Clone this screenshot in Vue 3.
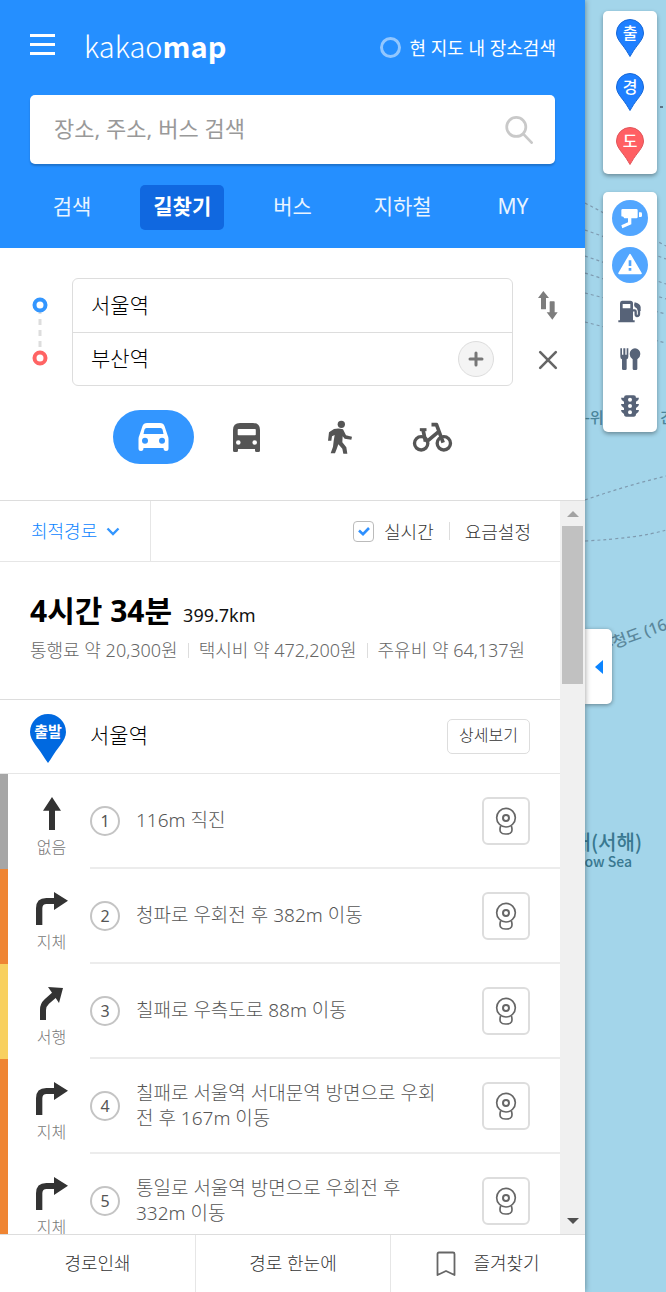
<script setup>
import { ref } from 'vue'

const tabs = ['검색', '길찾기', '버스', '지하철', 'MY']
const activeTab = ref('길찾기')
const keyword = ref('')
const inView = ref(false)
const origin = ref('서울역')
const destination = ref('부산역')
const mode = ref('car')
const sort = ref('최적경로')
const realtime = ref(true)

const modes = [
  { id: 'car', label: '자동차' },
  { id: 'bus', label: '대중교통' },
  { id: 'walk', label: '도보' },
  { id: 'bike', label: '자전거' }
]

const costs = ['통행료 약 20,300원', '택시비 약 472,200원', '주유비 약 64,137원']

const steps = [
  { icon: 'straight', traffic: '없음', level: 'none', lines: ['116m 직진'] },
  { icon: 'right', traffic: '지체', level: 'delay', lines: ['청파로 우회전 후 382m 이동'] },
  { icon: 'slight', traffic: '서행', level: 'slow', lines: ['칠패로 우측도로 88m 이동'] },
  { icon: 'right', traffic: '지체', level: 'delay', lines: ['칠패로 서울역 서대문역 방면으로 우회', '전 후 167m 이동'] },
  { icon: 'right', traffic: '지체', level: 'delay', lines: ['통일로 서울역 방면으로 우회전 후', '332m 이동'] }
]

const pins = [
  { text: '출', name: '출발지', kind: 'blue' },
  { text: '경', name: '경유지', kind: 'blue' },
  { text: '도', name: '도착지', kind: 'red' }
]
</script>

<template>
  <div class="page">
    <main class="panel">
      <header class="top">
        <div class="brand-row">
          <button class="menu" aria-label="메뉴"><i></i><i></i><i></i></button>
          <a class="logo" href="#">kakao<b>map</b></a>
          <label class="in-view">
            <input v-model="inView" type="checkbox" />
            <span>현 지도 내 장소검색</span>
          </label>
        </div>
        <form class="search" @submit.prevent>
          <input v-model="keyword" type="text" aria-label="장소, 주소, 버스 검색" placeholder="장소, 주소, 버스 검색" />
          <button aria-label="검색 실행">
            <svg width="28" height="28" viewBox="648 347 82 82" fill="none" stroke="#c9c9c9" stroke-width="8">
              <circle cx="681" cy="379" r="28" />
              <path d="M702 400l24 25" stroke-linecap="round" />
            </svg>
          </button>
        </form>
        <nav class="tabs">
          <a v-for="t in tabs" :key="t" href="#" :class="{ active: t === activeTab }" @click.prevent="activeTab = t"><span>{{ t }}</span></a>
        </nav>
      </header>

      <section class="planner">
        <div class="points">
          <svg class="dots" width="16" height="70" viewBox="0 0 16 70" fill="#fff">
            <path d="M8 14v40" stroke="#ddd" stroke-width="3" stroke-dasharray="6 5" stroke-dashoffset="3" />
            <circle cx="8" cy="8" r="5.5" stroke="#3396ff" stroke-width="4" />
            <circle cx="8" cy="61" r="5.5" stroke="#ff6464" stroke-width="4" />
          </svg>
          <div class="fields">
            <div class="field"><input v-model="origin" type="text" aria-label="출발지" /></div>
            <div class="field">
              <input v-model="destination" type="text" aria-label="도착지" />
              <button class="add" aria-label="경유지 추가">
                <svg width="16" height="16" viewBox="0 0 16 16"><path d="M8 2v12M2 8h12" stroke="#777" stroke-width="3" stroke-linecap="round" /></svg>
              </button>
            </div>
          </div>
          <div class="actions">
            <button aria-label="출발지와 도착지 바꾸기">
              <svg width="20" height="29" viewBox="747 90 60 87" fill="#7d7d7d">
                <path d="M763 90l17 21h-9v32q0 2-2 2h-11q-2 0-2-2v-32h-9zM790 176l-17-22h9v-31q0-2 2-2h11q2 0 2 2v31h9z" />
              </svg>
            </button>
            <button aria-label="지우기">
              <svg width="20" height="20" viewBox="0 0 20 20"><path d="M2.200 2.200l15.600 15.600M17.800 2.200L2.200 17.800" stroke="#666" stroke-width="2.600" stroke-linecap="round" /></svg>
            </button>
          </div>
        </div>
        <div class="modes">
          <button v-for="m in modes" :key="m.id" :class="{ on: m.id === mode }" :aria-label="m.label" @click="mode = m.id">
            <svg v-if="m.id === 'car'" width="31" height="28" viewBox="0 0 31 28" fill="currentColor" fill-rule="evenodd">
              <path d="M9 0h13q3.500 0 4.500 3l3 9q1 2 1 4v9.500q0 2.500-2.500 2.500t-2.500-3H5.500q0 3-2.500 3T.500 25.500V16q0-2 1-4l3-9q1-3 4.500-3zM8.500 5q-1.500 0-2 1.500L5.500 11h20l-1-4.500Q24 5 22.500 5zM7 14.700a3 3 0 100 6 3 3 0 000-6zM24 14.700a3 3 0 100 6 3 3 0 000-6z" />
            </svg>
            <svg v-else-if="m.id === 'bus'" width="27" height="29" viewBox="0 0 27 29" fill="currentColor" fill-rule="evenodd">
              <path d="M7 0h13q7 0 7 7v20.500q0 1.500-1.500 1.500h-2q-1.500 0-1.500-1.500V26H5v1.500Q5 29 3.500 29h-2Q0 29 0 27.500V7q0-7 7-7zM5.500 6q-.800 0-.800.800v4.700q0 .800.800.800h16.500q.800 0 .800-.800V6.800q0-.800-.800-.800zM5.300 17.200a2.300 2.300 0 100 4.600 2.300 2.300 0 000-4.600zM21.700 17.200a2.300 2.300 0 100 4.600 2.300 2.300 0 000-4.600z" />
            </svg>
            <svg v-else-if="m.id === 'walk'" width="24" height="34" viewBox="117 480 72 102" fill="currentColor">
              <circle cx="157" cy="493" r="11" />
              <path d="M120 517l15-10q14-4 27 1l9 18 18 4-2 9-20-3-6-7-1 18 12 15 3 19h-12l-3-15-12-13-5 14-5 13h-13l7-20 2-17 3-18-8 4-2 13h-10z" />
            </svg>
            <svg v-else width="41" height="30" viewBox="367 483 122 90" fill="none" stroke="currentColor">
              <g stroke-width="10"><circle cx="394" cy="547" r="20" /><circle cx="462" cy="547" r="20" /></g>
              <path d="M425 491h15l20 54M408 544l42-35M400 508l7 34" stroke-width="11" stroke-linejoin="round" />
              <path d="M390 506h20" stroke-width="9" />
            </svg>
          </button>
        </div>
      </section>

      <section class="result">
        <div class="scroll">
          <div class="options">
            <div class="sort">
              <select v-model="sort" aria-label="경로 기준"><option>최적경로</option><option>무료우선</option></select>
              <svg width="14" height="9" viewBox="0 0 14 9" fill="none"><path d="M1.500 1.500L7 7l5.500-5.500" stroke="#3396ff" stroke-width="2.400" /></svg>
            </div>
            <div class="option-right">
              <label class="live"><input v-model="realtime" type="checkbox" /><svg width="12" height="9" viewBox="0 0 12 9" fill="none"><path d="M1 3.500L5 7.200 11 1" stroke="#2e90ff" stroke-width="2.600" /></svg><span>실시간</span></label>
              <i class="bar"></i>
              <button class="fare">요금설정</button>
            </div>
          </div>

          <div class="summary">
            <p class="time"><strong>4시간 34분</strong><span>399.7km</span></p>
            <ul class="costs"><li v-for="c in costs" :key="c">{{ c }}</li></ul>
          </div>

          <div class="start">
            <svg class="start-pin" width="36" height="49" viewBox="0 0 36 49">
              <path d="M18 0a18 18 0 0118 18c0 9-9 16-15.500 27.500L18 49l-2.500-3.500C9 34 0 27 0 18A18 18 0 0118 0z" fill="#0069e0" />
              <text x="18" y="23" text-anchor="middle" font-size="15" font-weight="700" fill="#fff">출발</text>
            </svg>
            <h2>서울역</h2>
            <button>상세보기</button>
          </div>

          <ol class="steps">
            <li v-for="(s, i) in steps" :key="i" :class="s.level">
              <div class="turn">
                <svg v-if="s.icon === 'straight'" width="18" height="33" viewBox="126 81 54 99"><path d="M153 81l27 41h-18v58h-18v-58h-18z" /></svg>
                <svg v-else-if="s.icon === 'right'" width="32" height="33" viewBox="108 363 96 99"><path d="M108 462v-50q0-31 31-31h23v-18l42 26-42 28v-18h-22q-13 0-13 13v50z" /></svg>
                <svg v-else width="23" height="33" viewBox="117 648 69 99"><path d="M117 747v-31q0-18 14-31l22-20-12-17 45 3-12 45-10-15-20 17q-9 8-9 19v30z" /></svg>
                <span>{{ s.traffic }}</span>
              </div>
              <div class="step-body">
                <b>{{ i + 1 }}</b>
                <p><template v-for="(l, k) in s.lines" :key="k"><br v-if="k" />{{ l }}</template></p>
                <button aria-label="로드뷰">
                  <svg width="22" height="28" viewBox="285 82 66 84" fill="none" stroke="#666">
                    <circle cx="318" cy="114" r="28" stroke-width="5" />
                    <circle cx="318" cy="115" r="9" stroke-width="6" />
                    <path d="M302 138q-8 26 16 25 24 1 16-25" stroke-width="5" />
                  </svg>
                </button>
              </div>
            </li>
          </ol>
        </div>
        <div class="track" aria-hidden="true"><i class="up"></i><i class="thumb"></i><i class="down"></i></div>
      </section>

      <footer class="bottom">
        <button>경로인쇄</button>
        <button>경로 한눈에</button>
        <button>
          <svg width="20" height="26" viewBox="0 0 20 26" fill="none"><path d="M3 1.500h14q1.500 0 1.500 1.500v21L10 20l-8.500 4V3Q1.500 1.500 3 1.500z" stroke="#666" stroke-width="1.800" stroke-linejoin="round" /></svg>
          <span>즐겨찾기</span>
        </button>
      </footer>
    </main>

    <aside class="map">
      <svg class="contours" width="81" height="600" viewBox="585 0 81 600" fill="none" stroke="#7f9bb0" stroke-width="1.200" stroke-dasharray="3 3">
        <path d="M585 203L666 246M585 230L666 259M585 256L666 284M585 273L666 299M585 293L666 314M585 322L666 343M585 500Q625 486 666 476M585 541Q640 538 666 530" />
        <path d="M660 107h6" stroke="#334" />
      </svg>
      <span class="place wido">-위</span>
      <span class="place gan">간</span>
      <span class="place island">-청도 (16</span>
      <span class="place sea">황해(서해)</span>
      <span class="place sea-en">Yellow Sea</span>

      <button class="fold" aria-label="패널 접기"><i></i></button>

      <div class="tools">
        <div class="tool-group pins">
          <button v-for="p in pins" :key="p.name" :aria-label="p.name">
            <svg width="28" height="38" viewBox="0 0 28 38">
              <path :class="p.kind" d="M14 .500A13.500 13.500 0 0127.500 14c0 7-7 12-11.700 20.500L14 37.500l-1.800-3C7.500 26 .500 21 .500 14A13.500 13.500 0 0114 .500z" />
              <text x="14" y="20" text-anchor="middle" font-size="16" font-weight="500" fill="#fff">{{ p.text }}</text>
            </svg>
          </button>
        </div>
        <div class="tool-group layers">
          <button class="on" aria-label="CCTV">
            <svg width="36" height="36" viewBox="96 600 108 108" fill="#fff">
              <path d="M128 627h41q4 0 4 4v20q0 4-4 4h-15v18l-27 12-3-9 20-9v-12h-11q-2-6-9-6v-18q0-4 4-4zM177 637h5q4 0 4 4v6q0 4-4 4h-5z" />
            </svg>
          </button>
          <button class="on" aria-label="교통정보">
            <svg width="36" height="36" viewBox="96 201 108 108">
              <path d="M150 224l33 56h-66z" fill="#fff" stroke="#fff" stroke-width="5" stroke-linejoin="round" />
              <path d="M150 241v17M150 264v8" stroke="#52a6ff" stroke-width="8" />
            </svg>
          </button>
          <button aria-label="주유소">
            <svg width="24" height="23" viewBox="118 359 72 69" fill="#576378">
              <path fill-rule="evenodd" d="M130 361h25q8 0 8 8v51h5v6h-49v-6h5v-51q0-8 6-8zM132 371v13h23v-13z" />
              <path d="M162 390h6q3 0 3 3v9q0 5 4 5 6 0 6-5v-14" fill="none" stroke="#576378" stroke-width="7" />
              <path d="M168 366q16 3 18 14v12h-8l-4-8q-7-2-8-10z" />
            </svg>
          </button>
          <button aria-label="음식점">
            <svg width="21" height="22" viewBox="121 500 63 66" fill="#576378">
              <path d="M122 501h5v19h4v-19h6v19h4v-19h5v25q0 6-5 8v28q0 4-4 4h-6q-4 0-4-4v-28q-5-2-5-8zM166 501a16 17 0 0116 17q0 10-9 16v28q0 4-4 4h-6q-4 0-4-4v-28q-9-6-9-16a16 17 0 0116-17z" />
            </svg>
          </button>
          <button aria-label="신호등">
            <svg width="20" height="22" viewBox="120 639 60 66" fill="#576378" fill-rule="evenodd">
              <path d="M139 640h22q7 0 7 7h9q0 8-9 12v7h9q0 8-9 12v6h9q0 8-9 12 0 8-7 8h-22q-7 0-7-8-9-4-9-12h9v-6q-9-4-9-12h9v-7q-9-4-9-12h9q0-7 7-7zM150 647a6 6 0 100 12 6 6 0 000-12zM150 666a6 6 0 100 12 6 6 0 000-12zM150 685a6 6 0 100 12 6 6 0 000-12z" />
            </svg>
          </button>
        </div>
      </div>
    </aside>
  </div>
</template>

<style>
body { font-family: "Noto Sans", "Noto Sans CJK KR", sans-serif; font-weight: 300; }
</style>

<style scoped>
* { box-sizing: border-box; margin: 0; }
button, input, select { padding: 0; border: 0; background: none; font: inherit; color: inherit; border-radius: 0; outline: 0; }
button { cursor: pointer; display: flex; align-items: center; justify-content: center; }
a { color: inherit; text-decoration: none; }
ul, ol { list-style: none; padding: 0; }
svg { display: block; flex: none; }

.page { display: grid; grid-template-columns: minmax(0, 1fr) 81px; height: 100vh; overflow: hidden; }
.panel { display: flex; flex-direction: column; min-height: 0; background: #fff; position: relative; z-index: 1; box-shadow: 0 0 6px rgba(0, 0, 0, .4); }

.top { background: #258fff; color: #fff; padding-bottom: 18px; font-weight: 400; }
.brand-row { display: flex; align-items: center; height: 95px; padding: 0 29px 0 30px; }
.menu { display: flex; flex-direction: column; gap: 6px; width: 25px; margin-bottom: 6px; }
.menu i { width: 25px; height: 3px; background: #fff; }
.logo { margin-left: 29px; font: 300 29px/40px "Noto Sans CJK KR", sans-serif; margin-bottom: 6px; }
.logo b { font-weight: 700; }
.in-view { display: flex; align-items: center; gap: 8px; margin-left: auto; font-size: 18px; line-height: 26px; }
.in-view input { appearance: none; width: 21px; height: 21px; border: 3px solid #92c7ff; border-radius: 50%; }
.in-view input:checked { background: #fff; }
.search { display: flex; align-items: center; height: 69px; margin: 0 30px; padding: 0 22px 0 24px; background: #fff; border-radius: 5px; box-shadow: 0 2px 2px rgba(0, 0, 0, .2); }
.search input { flex: 1; min-width: 0; height: 60px; padding-bottom: 4px; font-size: 22px; color: #333; }
.search input::placeholder { color: #999; opacity: 1; }
.tabs { display: grid; grid-template-columns: repeat(5, 1fr); margin: 21px 17px 0; font-size: 21px; line-height: 42px; text-align: center; color: #e9f4ff; }
.tabs a { display: flex; justify-content: center; }
.tabs span { display: block; padding-bottom: 3px; }
.tabs .active span { width: 84px; border-radius: 5px; background: #1068e0; font-weight: 700; color: #fff; }

.planner { padding: 30px 27px 36px 32px; border-bottom: 1px solid #ddd; }
.points { display: flex; align-items: center; }
.dots { margin-right: 24px; }
.fields { flex: 1; min-width: 0; border: 1px solid #ddd; border-radius: 6px; }
.field { display: flex; align-items: center; height: 53px; padding: 0 18px; }
.field + .field { border-top: 1px solid #ddd; }
.field input { flex: 1; min-width: 0; height: 46px; padding-bottom: 4px; font-size: 21px; color: #000; }
.add { width: 36px; height: 36px; border: 1px solid #ddd; border-radius: 50%; background: #f4f4f4; }
.actions { display: flex; flex-direction: column; gap: 30px; align-items: center; margin-left: 25px; padding-bottom: 4px; }
.modes { display: flex; justify-content: center; gap: 12px; margin: 24px 4px 0 0; }
.modes button { width: 81px; height: 54px; border-radius: 27px; color: #555; }
.modes .on { background: #3396ff; color: #fff; }

.result { flex: 1; min-height: 0; display: flex; }
.scroll { flex: 1; min-width: 0; overflow-y: auto; scrollbar-width: none; }
.options { display: flex; height: 61px; border-bottom: 1px solid #e6e6e6; font-size: 18px; color: #333; }
.sort { display: flex; align-items: center; gap: 8px; width: 151px; padding-left: 31px; border-right: 1px solid #e6e6e6; color: #0b84ff; }
.sort select { appearance: none; width: 67px; height: 40px; }
.option-right { display: flex; align-items: center; margin-left: auto; padding-right: 29px; }
.live { display: grid; grid-template-columns: 21px auto; column-gap: 10px; align-items: center; }
.live input { appearance: none; grid-area: 1 / 1; width: 21px; height: 21px; border: 1px solid #bbb; border-radius: 4px; }
.live svg { grid-area: 1 / 1; justify-self: center; visibility: hidden; }
.live input:checked + svg { visibility: visible; }
.bar { width: 1px; height: 18px; margin: 0 15px; background: #ddd; }

.summary { padding: 29px 30px 35px; border-bottom: 1px solid #ddd; }
.time { display: flex; align-items: baseline; gap: 11px; line-height: 40px; color: #111; }
.time strong { font-size: 30px; font-weight: 700; color: #000; }
.time span { font-size: 18px; font-weight: 400; }
.costs { display: flex; margin-top: 2px; font-size: 18px; line-height: 27px; color: #666; white-space: nowrap; }
.costs li { display: flex; align-items: center; }
.costs li + li::before { content: ""; width: 1px; height: 15px; margin: 0 10px; background: #ddd; }

.start { display: flex; align-items: center; height: 74px; padding: 0 30px; border-bottom: 1px solid #e6e6e6; }
.start-pin { margin-top: 4px; }
.start h2 { margin-left: 24px; padding-bottom: 3px; font-size: 21px; font-weight: 300; line-height: 30px; }
.start button { margin-left: auto; width: 83px; height: 35px; padding-bottom: 3px; border: 1px solid #ddd; border-radius: 5px; font-size: 16px; line-height: 24px; color: #333; }

.steps li { display: flex; min-height: 95px; border-left: 8px solid #a6a6a6; }
.steps .delay { border-color: #ef8533; }
.steps .slow { border-color: #f8d05f; }
.turn { display: flex; flex-direction: column; align-items: center; width: 82px; padding: 23px 0 0 5px; font-size: 16px; line-height: 24px; color: #777; fill: #333; }
.turn span { margin-top: 5px; }
.step-body { flex: 1; min-width: 0; display: flex; align-items: center; padding-right: 30px; border-bottom: 2px solid #ececec; }
.step-body b { display: flex; align-items: center; justify-content: center; flex: none; width: 30px; height: 30px; border: 2px solid #c4c4c4; border-radius: 50%; font-size: 16px; font-weight: 400; color: #555; }
.step-body p { flex: 1; margin-left: 16px; font-size: 19px; line-height: 25px; color: #555; white-space: nowrap; }
.step-body button { flex: none; width: 48px; height: 48px; border: 2px solid #ddd; border-radius: 6px; }

.track { display: flex; flex-direction: column; align-items: center; width: 25px; background: #f0f0f0; }
.track .up { margin: 10px 0 9px; border: solid transparent; border-width: 0 6px 6px; border-bottom-color: #a3a3a3; }
.track .thumb { width: 21px; height: 158px; background: #c1c1c1; }
.track .down { margin: auto 0 10px; border: solid transparent; border-width: 6px 6px 0; border-top-color: #505050; }

.bottom { display: grid; grid-template-columns: repeat(3, 1fr); height: 58px; border-top: 1px solid #ddd; font-size: 18px; color: #333; }
.bottom button { gap: 17px; padding-bottom: 4px; }
.bottom svg { margin-top: 4px; }
.bottom button + button { border-left: 1px solid #e6e6e6; }

.map { position: relative; z-index: 0; overflow: hidden; background: #a3d5ea; }
.contours { position: absolute; left: 0; top: 0; }
.place { position: absolute; white-space: nowrap; color: #4b869c; font-weight: 500; }
.wido { left: 0; top: 407px; font-size: 15px; line-height: 20px; }
.gan { right: -8px; top: 407px; font-size: 15px; line-height: 20px; }
.island { left: 21px; top: 624px; font-size: 16px; line-height: 20px; transform: rotate(-20deg); color: #5a879b; }
.sea { right: 24px; top: 831px; font: 500 20px/22px "Noto Sans CJK KR", sans-serif; color: #397890; }
.sea-en { right: 34px; top: 853px; font: 500 14px/16px "Noto Sans CJK KR", sans-serif; color: #397890; }
.fold { position: absolute; left: 0; top: 629px; width: 27px; height: 75px; background: #fff; border-radius: 0 5px 5px 0; box-shadow: 0 1px 4px rgba(0, 0, 0, .4); }
.fold i { border: solid transparent; border-width: 7px 8px 7px 0; border-right-color: #0b84ff; }
.tools { position: relative; display: flex; flex-direction: column; gap: 18px; padding: 11px 9px 0 18px; }
.tool-group { display: flex; flex-direction: column; align-items: center; background: #fff; border-radius: 5px; box-shadow: 0 2px 4px rgba(0, 0, 0, .35); }
.pins { gap: 16px; padding: 8px 0 9px; }
.layers { padding: 2px 0 3px; }
.layers button { width: 47px; height: 47px; }
.layers .on svg { background: #52a6ff; border-radius: 50%; }
.blue { fill: #1e7fff; stroke: #1768d8; }
.red { fill: #ff5f63; stroke: #e0555a; }
</style>
